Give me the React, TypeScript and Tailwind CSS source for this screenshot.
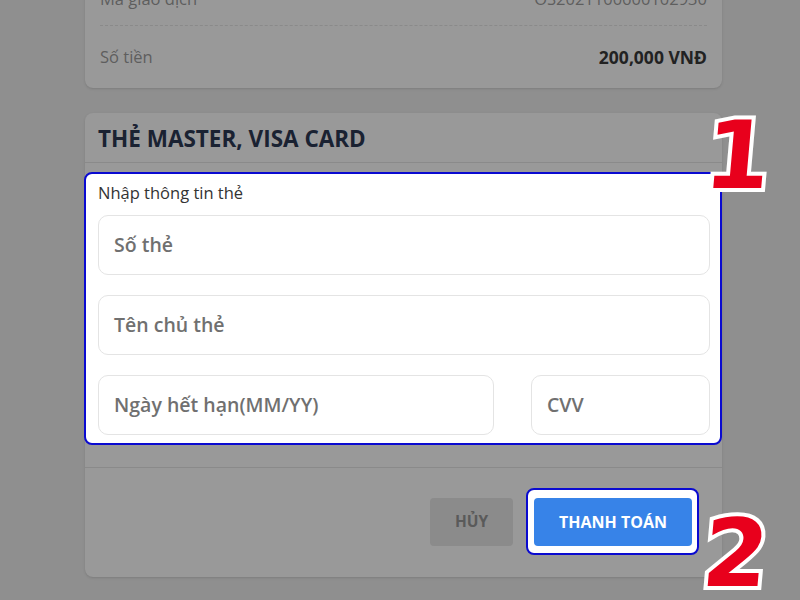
import React from "react";

const font = "font-['Open_Sans','Noto_Sans',sans-serif]";

// marker numbers drawn over the screenshot
const Marker = ({ n, className }: { n: string; className: string }) => (
  <span
    className={`absolute -skew-x-[5deg] font-['DejaVu_Sans',Verdana,sans-serif] text-[94px] leading-none font-bold text-[#e8001c] [-webkit-text-stroke:8px_white] [paint-order:stroke_fill] ${className}`}
  >
    {n}
  </span>
);

const Field = ({ label, className = "" }: { label: string; className?: string }) => (
  <div
    className={`h-[60px] flex items-center pl-[15px] rounded-[10px] border border-[#e4e4e4] bg-white text-[19.5px] font-semibold text-[#707070] ${className}`}
  >
    {label}
  </div>
);

export default function App() {
  return (
    <div className={`relative h-[600px] w-[800px] overflow-hidden bg-[#8f8f8f] ${font}`}>
      <div className="ml-[85px] w-[637px] flex flex-col">
        {/* summary card */}
        <div className="mt-[-40px] pt-[5px] rounded-lg bg-[#999999] shadow-sm px-[15px]">
          <div className="h-[61px] pt-[8px] flex items-center justify-between border-b border-dashed border-[#8a8a8a] text-[16.5px] text-[#5e5e5e]">
            <span>Mã giao dịch</span>
            <span>OS2021100600102930</span>
          </div>
          <div className="h-[62px] flex items-center justify-between text-[16.5px]">
            <span className="text-[#5e5e5e]">Số tiền</span>
            <span className="text-[17.5px] font-bold text-[#222]">200,000 VNĐ</span>
          </div>
        </div>

        {/* card form */}
        <div className="mt-[25px] rounded-lg bg-[#999999] shadow-sm">
          <div className="h-[50px] pt-[3px] flex items-center px-[13px] border-b border-[#8a8a8a]">
            <h2 className="text-[22.5px] font-bold text-[#1a2232]">THẺ MASTER, VISA CARD</h2>
          </div>

          <div className="mt-[9px] -ml-px rounded-lg border-2 border-[#0a0ad0] bg-white pl-[12px] pr-[10px] pt-[9px] pb-[8px]">
            <div className="text-[16.5px] leading-[20px] text-[#333]">Nhập thông tin thẻ</div>
            <div className="mt-[12px] flex flex-col gap-5">
              <Field label="Số thẻ" />
              <Field label="Tên chủ thẻ" />
              <div className="flex gap-[37px]">
                <Field label="Ngày hết hạn(MM/YY)" className="flex-1" />
                <Field label="CVV" className="w-[179px]" />
              </div>
            </div>
          </div>

          <div className="mt-[22px] border-t border-[#8a8a8a] flex items-center justify-end gap-[13px] pr-[23px] pt-[20px] pb-[22px]">
            <button className="h-[48px] w-[83px] rounded bg-[#8b8b8b] text-[15.5px] font-bold text-[#5a5a5a]">
              HỦY
            </button>
            <div className="rounded-lg border-2 border-[#0a0ad0] bg-white pl-[6px] pr-[5px] pt-[8px] pb-[7px]">
              <button className="h-[48px] w-[158px] rounded bg-[#3783e8] text-[16px] font-bold text-white">
                THANH TOÁN
              </button>
            </div>
          </div>
        </div>
      </div>

      <Marker n="1" className="left-[705px] top-[109px]" />
      <Marker n="2" className="left-[703px] top-[507px]" />
    </div>
  );
}
